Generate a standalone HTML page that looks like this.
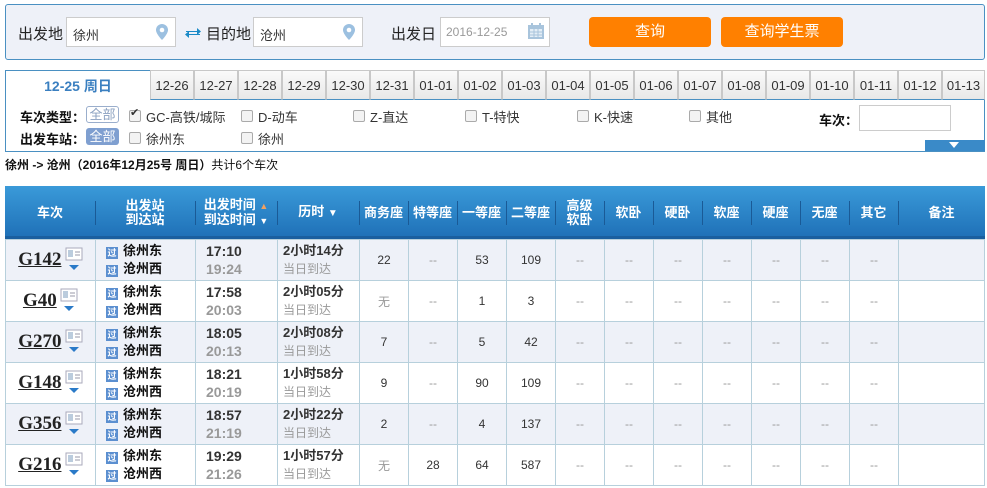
<!DOCTYPE html><html><head><meta charset="utf-8"><style>
*{margin:0;padding:0;box-sizing:border-box}
body{width:987px;height:488px;overflow:hidden;background:#fff;font-family:"Liberation Sans","Noto Sans CJK SC",sans-serif;font-size:13px;color:#333;position:relative}
.a{position:absolute}
.top{left:5px;top:4px;width:980px;height:56px;background:#eef1f8;border:1px solid #4a90c2;border-radius:3px}
.inp{background:#fff;border:1px solid #ccc;height:30px;top:17px}
.lbl{font-size:15px;color:#222;top:23px}
.btn{background:#ff8000;color:#fff;font-size:15px;text-align:center;line-height:30px;border-radius:4px;top:17px;height:30px}
.tabs{top:70px;left:5px;width:980px;height:82px;border:1px solid #4a90c2;border-top:none}
.tab{top:70px;height:30px;background:linear-gradient(#fafafa,#e8e8e8);border:1px solid #c8c8c8;border-bottom:1px solid #4a90c2;text-align:center;line-height:29px;font-size:13px;color:#333}
.cb{width:12px;height:12px;border:1px solid #aaa;border-radius:2px;background:#f3f3f3}
.b{font-weight:bold;color:#111}
table{position:absolute;left:5px;top:186px;width:980px;border-collapse:collapse;table-layout:fixed}
th{background:linear-gradient(#3a9ad9,#1e6fb6);color:#fff;height:53px;font-size:13px;font-weight:bold;line-height:14px;position:relative}
th .d{position:absolute;left:0;top:15px;width:1px;height:24px;background:#1a5a96}
td{border:1px solid #b7d0dc;height:41px;text-align:center;font-size:12px;color:#333}
tr.o td{background:#eef1f8}
.dash{color:#999}
.tn{font-family:"Liberation Serif",serif;font-weight:bold;font-size:19px;text-decoration:underline;color:#222;vertical-align:middle}
.st{font-weight:bold;font-size:13px;color:#111;line-height:18px;text-align:left}
.gq{display:inline-block;width:12px;height:12px;background:#5b8fd0;color:#fff;font-size:9px;line-height:12px;text-align:center;margin-right:5px;vertical-align:-1px}
.tm{font-weight:bold;font-size:14px;line-height:18px;text-align:left}
.g{color:#999}
</style></head><body>
<div class="a top"></div>
<div class="a lbl" style="left:18px">出发地</div>
<div class="a inp" style="left:66px;width:110px;padding:7px 6px;font-size:13px">徐州</div>
<svg class="a" style="left:155px;top:23px" width="14" height="18"><path d="M7 1a6 6 0 0 1 6 6c0 4-6 10-6 10S1 11 1 7a6 6 0 0 1 6-6z" fill="#9cc0e0"/><circle cx="7" cy="7" r="2.3" fill="#fff"/></svg>
<svg class="a" style="left:184px;top:26px" width="18" height="14"><path d="M2 5h11V2l4 3.5-4 3.5V6H2z M16 9H5v3L1 8.5 5 5v3h11z" fill="#1a8ac7"/></svg>
<div class="a lbl" style="left:206px">目的地</div>
<div class="a inp" style="left:253px;width:110px;padding:7px 6px;font-size:13px">沧州</div>
<svg class="a" style="left:342px;top:23px" width="14" height="18"><path d="M7 1a6 6 0 0 1 6 6c0 4-6 10-6 10S1 11 1 7a6 6 0 0 1 6-6z" fill="#9cc0e0"/><circle cx="7" cy="7" r="2.3" fill="#fff"/></svg>
<div class="a lbl" style="left:391px">出发日</div>
<div class="a inp" style="left:440px;width:110px;padding:7px 5px;font-size:12px;color:#999">2016-12-25</div>
<svg class="a" style="left:528px;top:23px" width="16" height="16"><rect x="0" y="2" width="16" height="14" fill="#a8c4dc"/><rect x="2" y="6" width="12" height="8" fill="#e4eef6"/><path d="M2 9h12M2 12h12M6 6v8M10 6v8" stroke="#a8c4dc"/><rect x="3" y="0" width="2" height="4" fill="#a8c4dc"/><rect x="11" y="0" width="2" height="4" fill="#a8c4dc"/></svg>
<div class="a btn" style="left:589px;width:122px">查询</div>
<div class="a btn" style="left:721px;width:122px">查询学生票</div>

<div class="a tabs"></div>
<div class="a" style="left:5px;top:70px;width:145px;height:30px;text-align:center;line-height:30px;color:#3a7fc0;font-weight:bold;font-size:14px;border-top:1px solid #4a90c2;border-left:1px solid #4a90c2">12-25 周日</div>
<div class="a tab" style="left:150px;width:44px">12-26</div><div class="a tab" style="left:194px;width:44px">12-27</div><div class="a tab" style="left:238px;width:44px">12-28</div><div class="a tab" style="left:282px;width:44px">12-29</div><div class="a tab" style="left:326px;width:44px">12-30</div><div class="a tab" style="left:370px;width:44px">12-31</div><div class="a tab" style="left:414px;width:44px">01-01</div><div class="a tab" style="left:458px;width:44px">01-02</div><div class="a tab" style="left:502px;width:44px">01-03</div><div class="a tab" style="left:546px;width:44px">01-04</div><div class="a tab" style="left:590px;width:44px">01-05</div><div class="a tab" style="left:634px;width:44px">01-06</div><div class="a tab" style="left:678px;width:44px">01-07</div><div class="a tab" style="left:722px;width:44px">01-08</div><div class="a tab" style="left:766px;width:44px">01-09</div><div class="a tab" style="left:810px;width:44px">01-10</div><div class="a tab" style="left:854px;width:44px">01-11</div><div class="a tab" style="left:898px;width:44px">01-12</div><div class="a tab" style="left:942px;width:43px">01-13</div>

<div class="a b" style="left:20px;top:107px">车次类型：</div>
<div class="a" style="left:86px;top:106px;width:33px;height:17px;border:1px solid #9aaecc;border-radius:3px;color:#8aa0c0;text-align:center;line-height:15px">全部</div>
<div class="a cb" style="left:129px;top:110px"></div><div class="a" style="left:130px;top:106px;font-size:11px;color:#333">✔</div>
<div class="a" style="left:146px;top:107px">GC-高铁/城际</div>
<div class="a cb" style="left:241px;top:110px"></div><div class="a" style="left:258px;top:107px">D-动车</div>
<div class="a cb" style="left:353px;top:110px"></div><div class="a" style="left:370px;top:107px">Z-直达</div>
<div class="a cb" style="left:465px;top:110px"></div><div class="a" style="left:482px;top:107px">T-特快</div>
<div class="a cb" style="left:577px;top:110px"></div><div class="a" style="left:594px;top:107px">K-快速</div>
<div class="a cb" style="left:689px;top:110px"></div><div class="a" style="left:706px;top:107px">其他</div>
<div class="a b" style="left:819px;top:110px">车次：</div>
<div class="a" style="left:859px;top:105px;width:92px;height:26px;border:1px solid #ccc;background:#fff"></div>
<div class="a b" style="left:20px;top:129px">出发车站：</div>
<div class="a" style="left:86px;top:128px;width:33px;height:17px;background:#7f9fd0;border-radius:3px;color:#fff;text-align:center;line-height:17px">全部</div>
<div class="a cb" style="left:129px;top:132px"></div><div class="a" style="left:146px;top:129px">徐州东</div>
<div class="a cb" style="left:241px;top:132px"></div><div class="a" style="left:258px;top:129px">徐州</div>
<div class="a" style="left:925px;top:140px;width:60px;height:11px;background:#3a8ac8"></div>
<svg class="a" style="left:949px;top:142px" width="10" height="6"><path d="M0 0h10L5 6z" fill="#fff"/></svg>

<div class="a" style="left:5px;top:156px;font-size:12px;color:#111"><b>徐州 -&gt; 沧州（2016年12月25号 周日）</b>共计6个车次</div>

<table>
<colgroup><col style="width:90px"><col style="width:100px"><col style="width:82px"><col style="width:82px"><col span="11" style="width:49px"><col></colgroup>
<tr><th>车次</th><th><i class="d"></i>出发站<br>到达站</th><th><i class="d"></i>出发时间 <span style="color:#f0a060;font-size:9px">▲</span><br>到达时间 <span style="font-size:9px">▼</span></th><th><i class="d"></i>历时 <span style="font-size:10px">▼</span></th><th><i class="d"></i>商务座</th><th><i class="d"></i>特等座</th><th><i class="d"></i>一等座</th><th><i class="d"></i>二等座</th><th><i class="d"></i>高级<br>软卧</th><th><i class="d"></i>软卧</th><th><i class="d"></i>硬卧</th><th><i class="d"></i>软座</th><th><i class="d"></i>硬座</th><th><i class="d"></i>无座</th><th><i class="d"></i>其它</th><th><i class="d"></i>备注</th></tr>
</table>
<div class="a" style="left:5px;top:236px;width:980px;height:3px;background:#1a5f9f"></div>
<table style="top:239px">
<colgroup><col style="width:90px"><col style="width:100px"><col style="width:82px"><col style="width:82px"><col span="11" style="width:49px"><col></colgroup>
<tr class="o"><td><span class="tn">G142</span> <svg width="18" height="26" style="vertical-align:middle"><rect x="1" y="1" width="16" height="12" fill="#fff" stroke="#aab"/><rect x="3" y="3" width="5" height="7" fill="#bcd"/><path d="M10 5h5M10 8h5" stroke="#99a"/><path d="M4 18h10l-5 5z" fill="#2a7ac8"/></svg></td><td class="st" style="padding-left:10px"><span class="gq">过</span>徐州东<br><span class="gq">过</span>沧州西</td><td class="tm" style="padding-left:10px">17:10<br><span class="g">19:24</span></td><td class="tm" style="padding-left:5px;font-size:13px">2小时14分<br><span class="g" style="font-weight:normal;font-size:12px">当日到达</span></td><td>22</td><td class="dash">--</td><td>53</td><td>109</td><td class="dash">--</td><td class="dash">--</td><td class="dash">--</td><td class="dash">--</td><td class="dash">--</td><td class="dash">--</td><td class="dash">--</td><td></td></tr>
<tr><td><span class="tn">G40</span> <svg width="18" height="26" style="vertical-align:middle"><rect x="1" y="1" width="16" height="12" fill="#fff" stroke="#aab"/><rect x="3" y="3" width="5" height="7" fill="#bcd"/><path d="M10 5h5M10 8h5" stroke="#99a"/><path d="M4 18h10l-5 5z" fill="#2a7ac8"/></svg></td><td class="st" style="padding-left:10px"><span class="gq">过</span>徐州东<br><span class="gq">过</span>沧州西</td><td class="tm" style="padding-left:10px">17:58<br><span class="g">20:03</span></td><td class="tm" style="padding-left:5px;font-size:13px">2小时05分<br><span class="g" style="font-weight:normal;font-size:12px">当日到达</span></td><td class="g">无</td><td class="dash">--</td><td>1</td><td>3</td><td class="dash">--</td><td class="dash">--</td><td class="dash">--</td><td class="dash">--</td><td class="dash">--</td><td class="dash">--</td><td class="dash">--</td><td></td></tr>
<tr class="o"><td><span class="tn">G270</span> <svg width="18" height="26" style="vertical-align:middle"><rect x="1" y="1" width="16" height="12" fill="#fff" stroke="#aab"/><rect x="3" y="3" width="5" height="7" fill="#bcd"/><path d="M10 5h5M10 8h5" stroke="#99a"/><path d="M4 18h10l-5 5z" fill="#2a7ac8"/></svg></td><td class="st" style="padding-left:10px"><span class="gq">过</span>徐州东<br><span class="gq">过</span>沧州西</td><td class="tm" style="padding-left:10px">18:05<br><span class="g">20:13</span></td><td class="tm" style="padding-left:5px;font-size:13px">2小时08分<br><span class="g" style="font-weight:normal;font-size:12px">当日到达</span></td><td>7</td><td class="dash">--</td><td>5</td><td>42</td><td class="dash">--</td><td class="dash">--</td><td class="dash">--</td><td class="dash">--</td><td class="dash">--</td><td class="dash">--</td><td class="dash">--</td><td></td></tr>
<tr><td><span class="tn">G148</span> <svg width="18" height="26" style="vertical-align:middle"><rect x="1" y="1" width="16" height="12" fill="#fff" stroke="#aab"/><rect x="3" y="3" width="5" height="7" fill="#bcd"/><path d="M10 5h5M10 8h5" stroke="#99a"/><path d="M4 18h10l-5 5z" fill="#2a7ac8"/></svg></td><td class="st" style="padding-left:10px"><span class="gq">过</span>徐州东<br><span class="gq">过</span>沧州西</td><td class="tm" style="padding-left:10px">18:21<br><span class="g">20:19</span></td><td class="tm" style="padding-left:5px;font-size:13px">1小时58分<br><span class="g" style="font-weight:normal;font-size:12px">当日到达</span></td><td>9</td><td class="dash">--</td><td>90</td><td>109</td><td class="dash">--</td><td class="dash">--</td><td class="dash">--</td><td class="dash">--</td><td class="dash">--</td><td class="dash">--</td><td class="dash">--</td><td></td></tr>
<tr class="o"><td><span class="tn">G356</span> <svg width="18" height="26" style="vertical-align:middle"><rect x="1" y="1" width="16" height="12" fill="#fff" stroke="#aab"/><rect x="3" y="3" width="5" height="7" fill="#bcd"/><path d="M10 5h5M10 8h5" stroke="#99a"/><path d="M4 18h10l-5 5z" fill="#2a7ac8"/></svg></td><td class="st" style="padding-left:10px"><span class="gq">过</span>徐州东<br><span class="gq">过</span>沧州西</td><td class="tm" style="padding-left:10px">18:57<br><span class="g">21:19</span></td><td class="tm" style="padding-left:5px;font-size:13px">2小时22分<br><span class="g" style="font-weight:normal;font-size:12px">当日到达</span></td><td>2</td><td class="dash">--</td><td>4</td><td>137</td><td class="dash">--</td><td class="dash">--</td><td class="dash">--</td><td class="dash">--</td><td class="dash">--</td><td class="dash">--</td><td class="dash">--</td><td></td></tr>
<tr><td><span class="tn">G216</span> <svg width="18" height="26" style="vertical-align:middle"><rect x="1" y="1" width="16" height="12" fill="#fff" stroke="#aab"/><rect x="3" y="3" width="5" height="7" fill="#bcd"/><path d="M10 5h5M10 8h5" stroke="#99a"/><path d="M4 18h10l-5 5z" fill="#2a7ac8"/></svg></td><td class="st" style="padding-left:10px"><span class="gq">过</span>徐州东<br><span class="gq">过</span>沧州西</td><td class="tm" style="padding-left:10px">19:29<br><span class="g">21:26</span></td><td class="tm" style="padding-left:5px;font-size:13px">1小时57分<br><span class="g" style="font-weight:normal;font-size:12px">当日到达</span></td><td class="g">无</td><td>28</td><td>64</td><td>587</td><td class="dash">--</td><td class="dash">--</td><td class="dash">--</td><td class="dash">--</td><td class="dash">--</td><td class="dash">--</td><td class="dash">--</td><td></td></tr>
</table>
</body></html>
